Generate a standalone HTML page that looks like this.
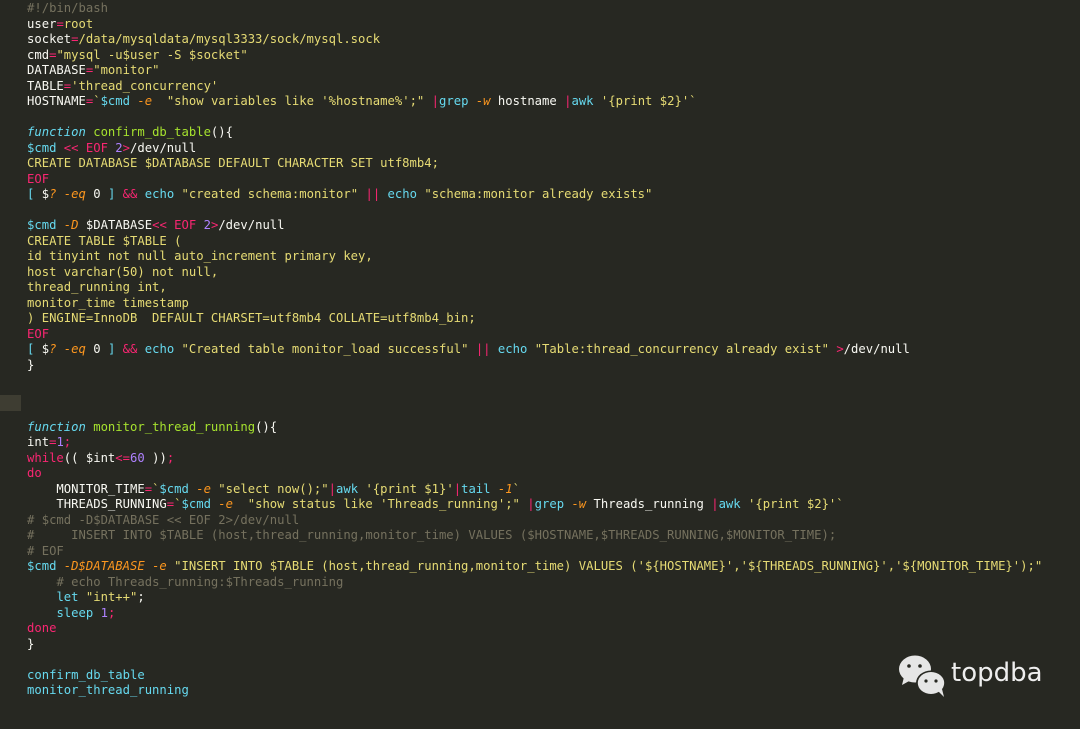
<!DOCTYPE html>
<html><head><meta charset="utf-8"><style>
html,body{margin:0;padding:0;background:#272822;width:1080px;height:729px;overflow:hidden}
pre{margin:0;position:absolute;left:27px;top:1px;font-family:"DejaVu Sans Mono","Liberation Mono",monospace;font-size:12.22px;line-height:15.5px;color:#f8f8f2}
.p{color:#f92672}.y{color:#e6db74}.c{color:#66d9ef}.ci{color:#66d9ef;font-style:italic}.g{color:#a6e22e}.v{color:#ae81ff}.o{color:#fd971f;font-style:italic}.m{color:#75715e}
.hl{position:absolute;left:0;top:395px;width:21px;height:16px;background:#3e3d32}
.logo{position:absolute;left:898px;top:653px}
.lt{position:absolute;left:951px;top:658px;font-family:"DejaVu Sans","Liberation Sans",sans-serif;font-size:26px;color:#eeeeee}
</style></head><body>
<div class="hl"></div>
<pre><span class="m">#!/bin/bash</span>
user<span class="p">=</span><span class="y">root</span>
socket<span class="p">=</span><span class="y">/data/mysqldata/mysql3333/sock/mysql.sock</span>
cmd<span class="p">=</span><span class="y">"mysql -u$user -S $socket"</span>
DATABASE<span class="p">=</span><span class="y">"monitor"</span>
TABLE<span class="p">=</span><span class="y">'thread_concurrency'</span>
HOSTNAME<span class="p">=</span><span class="y">`</span><span class="c">$cmd</span> <span class="o">-e</span>  <span class="y">"show variables like '%hostname%';"</span> <span class="p">|</span><span class="c">grep</span> <span class="o">-w</span> hostname <span class="p">|</span><span class="c">awk</span> <span class="y">'{print $2}'`</span>

<span class="ci">function</span> <span class="g">confirm_db_table</span>(){
<span class="c">$cmd</span> <span class="p">&lt;&lt; EOF</span> <span class="v">2</span><span class="p">&gt;</span>/dev/null
<span class="y">CREATE DATABASE $DATABASE DEFAULT CHARACTER SET utf8mb4;</span>
<span class="p">EOF</span>
<span class="c">[</span> $<span class="o">?</span> <span class="o">-eq</span> 0 <span class="c">]</span> <span class="p">&amp;&amp;</span> <span class="c">echo</span> <span class="y">"created schema:monitor"</span> <span class="p">||</span> <span class="c">echo</span> <span class="y">"schema:monitor already exists"</span>

<span class="c">$cmd</span> <span class="o">-D</span> $DATABASE<span class="p">&lt;&lt; EOF</span> <span class="v">2</span><span class="p">&gt;</span>/dev/null
<span class="y">CREATE TABLE $TABLE (
id tinyint not null auto_increment primary key,
host varchar(50) not null,
thread_running int,
monitor_time timestamp
) ENGINE=InnoDB  DEFAULT CHARSET=utf8mb4 COLLATE=utf8mb4_bin;</span>
<span class="p">EOF</span>
<span class="c">[</span> $<span class="o">?</span> <span class="o">-eq</span> 0 <span class="c">]</span> <span class="p">&amp;&amp;</span> <span class="c">echo</span> <span class="y">"Created table monitor_load successful"</span> <span class="p">||</span> <span class="c">echo</span> <span class="y">"Table:thread_concurrency already exist"</span> <span class="p">&gt;</span>/dev/null
}



<span class="ci">function</span> <span class="g">monitor_thread_running</span>(){
int<span class="p">=</span><span class="v">1</span><span class="p">;</span>
<span class="p">while</span>(( $int<span class="p">&lt;=</span><span class="v">60</span> ))<span class="p">;</span>
<span class="p">do</span>
    MONITOR_TIME<span class="p">=</span><span class="y">`</span><span class="c">$cmd</span> <span class="o">-e</span> <span class="y">"select now();"</span><span class="p">|</span><span class="c">awk</span> <span class="y">'{print $1}'</span><span class="p">|</span><span class="c">tail</span> <span class="o">-1</span><span class="y">`</span>
    THREADS_RUNNING<span class="p">=</span><span class="y">`</span><span class="c">$cmd</span> <span class="o">-e</span>  <span class="y">"show status like 'Threads_running';"</span> <span class="p">|</span><span class="c">grep</span> <span class="o">-w</span> Threads_running <span class="p">|</span><span class="c">awk</span> <span class="y">'{print $2}'`</span>
<span class="m"># $cmd -D$DATABASE &lt;&lt; EOF 2&gt;/dev/null
#     INSERT INTO $TABLE (host,thread_running,monitor_time) VALUES ($HOSTNAME,$THREADS_RUNNING,$MONITOR_TIME);
# EOF</span>
<span class="c">$cmd</span> <span class="o">-D$DATABASE</span> <span class="o">-e</span> <span class="y">"INSERT INTO $TABLE (host,thread_running,monitor_time) VALUES ('${HOSTNAME}','${THREADS_RUNNING}','${MONITOR_TIME}');"</span>
    <span class="m"># echo Threads_running:$Threads_running</span>
    <span class="c">let</span> <span class="y">"int++"</span>;
    <span class="c">sleep</span> <span class="v">1</span><span class="p">;</span>
<span class="p">done</span>
}

<span class="c">confirm_db_table</span>
<span class="c">monitor_thread_running</span></pre>
<svg class="logo" width="52" height="46" viewBox="0 0 52 46">
<ellipse cx="17" cy="16" rx="16" ry="13.5" fill="#e6e6e6"/>
<path d="M6 24 L4 32 L13 27 Z" fill="#e6e6e6"/>
<ellipse cx="33" cy="30" rx="15" ry="12.5" fill="#272822"/>
<ellipse cx="33" cy="30" rx="13.2" ry="11" fill="#e6e6e6"/>
<path d="M40 38 L46 44 L44 36 Z" fill="#e6e6e6"/>
<circle cx="11" cy="13" r="1.8" fill="#272822"/>
<circle cx="22" cy="13" r="1.8" fill="#272822"/>
<circle cx="28" cy="28" r="1.6" fill="#272822"/>
<circle cx="38" cy="28" r="1.6" fill="#272822"/>
</svg>
<div class="lt">topdba</div>
</body></html>
